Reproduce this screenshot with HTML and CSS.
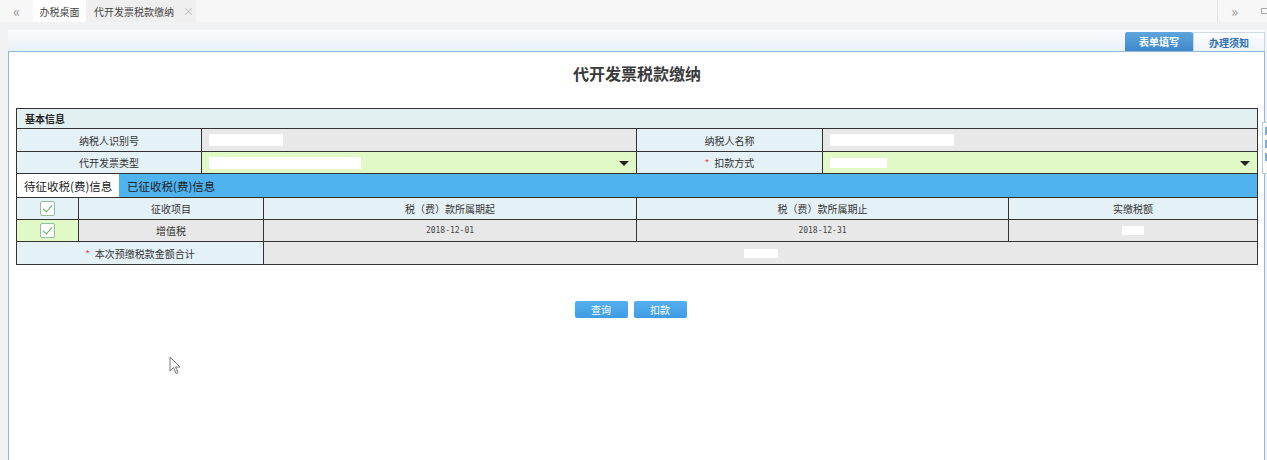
FILE: index.html
```html
<!DOCTYPE html>
<html lang="zh-CN">
<head>
<meta charset="utf-8">
<title>代开发票税款缴纳</title>
<link rel="stylesheet" href="styles.css">
</head>
<body>
<div class="topbar">
  <div class="nav-left">«</div>
  <div class="tab home">办税桌面</div>
  <div class="tab cur">代开发票税款缴纳<span class="close">×</span></div>
  <div class="fill"></div>
  <div class="nav-right">»</div>
  <div class="nav-max"><span class="max-box"></span></div>
</div>
<div class="main">
  <div class="phead">
    <div class="ptab on">表单填写</div>
    <div class="ptab off">办理须知</div>
  </div>
  <div class="panel">
    <h1 class="title">代开发票税款缴纳</h1>
    <div class="form">
      <div class="row sec"><div class="cell left">基本信息</div></div>
      <div class="row r1 cols4">
        <div class="cell lbl">纳税人识别号</div>
        <div class="cell val gray"><span class="mask" style="width:74px"></span></div>
        <div class="cell lbl">纳税人名称</div>
        <div class="cell val gray"><span class="mask" style="width:124px"></span></div>
      </div>
      <div class="row r2 cols4">
        <div class="cell lbl">代开发票类型</div>
        <div class="cell val green sel"><span class="mask" style="width:152px"></span><span class="caret"></span></div>
        <div class="cell lbl"><span class="req">*</span>扣款方式</div>
        <div class="cell val green sel"><span class="mask m2" style="width:57px"></span><span class="caret"></span></div>
      </div>
      <div class="tabs">
        <div class="itab on">待征收税(费)信息</div>
        <div class="itab">已征收税(费)信息</div>
      </div>
      <div class="row hdr cols5">
        <div class="cell lbl"><span class="chk"></span></div>
        <div class="cell lbl">征收项目</div>
        <div class="cell lbl">税（费）款所属期起</div>
        <div class="cell lbl">税（费）款所属期止</div>
        <div class="cell lbl">实缴税额</div>
      </div>
      <div class="row data cols5">
        <div class="cell green"><span class="chk"></span></div>
        <div class="cell gray">增值税</div>
        <div class="cell gray date">2018-12-01</div>
        <div class="cell gray date">2018-12-31</div>
        <div class="cell gray"><span class="mask m3" style="width:22px"></span></div>
      </div>
      <div class="row total cols2">
        <div class="cell lbl"><span class="req">*</span>本次预缴税款金额合计</div>
        <div class="cell gray"><span class="mask m3" style="width:34px"></span></div>
      </div>
    </div>
    <div class="btns">
      <button class="btn">查询</button>
      <button class="btn">扣款</button>
    </div>
  </div>
  <div class="peek"><span class="pk"></span><span class="pk"></span><span class="pk"></span></div>
  <svg class="cursor" width="12" height="19" viewBox="0 0 12 19"><path d="M1 1 L1 15 L4.5 11.5 L7 17.5 L9 16.6 L6.6 11 L11 11 Z" fill="#fff" stroke="#777" stroke-width="1"/></svg>
</div>
</body>
</html>
```

FILE: styles.css
```css
* { box-sizing: border-box; }
html, body { margin: 0; padding: 0; }
body {
  width: 1267px;
  height: 460px;
  overflow: hidden;
  background: #fff;
  font-family: "Noto Sans CJK SC", "Noto Sans", sans-serif;
  color: #333;
  position: relative;
}

/* top tab bar */
.topbar {
  height: 22px;
  display: flex;
  align-items: stretch;
  background: #f7f7f7;
}
.nav-left {
  width: 33px;
  display: flex;
  align-items: center;
  justify-content: center;
  color: #9a9a9a;
  font-size: 15px;
  padding-bottom: 2px;
}
.tab {
  display: flex;
  align-items: center;
  font-size: 10px;
  color: #444;
}
.tab.home {
  width: 53px;
  background: #fff;
  justify-content: center;
}
.tab.cur {
  width: 110px;
  background: #efefef;
  padding-left: 8px;
}
.close {
  margin-left: 9px;
  color: #bbb;
  font-size: 11px;
}
.fill { flex: 1; }
.nav-right {
  width: 34px;
  border-left: 1px solid #e2e2e2;
  display: flex;
  align-items: center;
  justify-content: center;
  color: #9a9a9a;
  font-size: 15px;
  padding-bottom: 2px;
}
.nav-max {
  width: 16px;
  display: flex;
  align-items: center;
  justify-content: flex-end;
}
.max-box {
  width: 6px;
  height: 6px;
  border: 1px solid #aaa;
  border-right: none;
}

/* main area */
.main {
  background: #f0f2f4;
  padding: 8px 2px 0 8px;
  height: 438px;
}
.phead {
  height: 21px;
  display: flex;
  justify-content: flex-end;
  align-items: flex-end;
  background: linear-gradient(#fbfcfd, #e9f1f7);
}
.ptab {
  height: 19px;
  display: flex;
  align-items: center;
  justify-content: center;
  font-size: 10px;
  font-weight: bold;
}
.ptab.on {
  width: 68px;
  background: linear-gradient(#5fa5de, #3e88cc);
  color: #fff;
  border-radius: 2px 2px 0 0;
}
.ptab.off {
  width: 72px;
  color: #2f6fb4;
  background: linear-gradient(#fdfeff, #edf3f8);
  border: 1px solid #c9dbe9;
  border-bottom: none;
}
.panel {
  background: #fff;
  border: 1px solid #8fb6dc;
  height: 417px;
  padding: 0 6px 0 7px;
}
.title {
  margin: 0;
  padding-top: 10px;
  height: 56px;
  line-height: 22px;
  text-align: center;
  font-size: 16px;
  font-weight: bold;
  color: #3a3a3a;
}

/* form grid */
.form {
  border: 1px solid #333;
  border-bottom: none;
  width: 1242px;
}
.row {
  display: grid;
  border-bottom: 1px solid #333;
}
.cols4 { grid-template-columns: 185px 435px 186px 434px; }
.cols5 { grid-template-columns: 62px 185px 373px 372px 248px; }
.cols2 { grid-template-columns: 247px 993px; }
.sec { height: 20px; background: #e2f0f2; }
.r1 { height: 23px; }
.r2 { height: 22px; }
.hdr { height: 23px; border-top: 1px solid #333; }
.data { height: 22px; }
.total { height: 23px; }
.cell {
  display: flex;
  align-items: center;
  justify-content: center;
  font-size: 10px;
  color: #333;
  border-right: 1px solid #333;
  position: relative;
}
.cell:last-child { border-right: none; }
.cell.left {
  justify-content: flex-start;
  padding-left: 8px;
  font-weight: bold;
  color: #222;
}
.lbl { background: #e4f1f6; }
.gray { background: #e8e8e8; }
.green { background: #e1f9c6; }
.val { justify-content: flex-start; padding-left: 7px; }
.mask {
  display: block;
  height: 12px;
  background: #fff;
}
.mask.m2 { height: 10px; }
.mask.m3 { height: 9px; }
.caret {
  position: absolute;
  right: 7px;
  top: 9px;
  width: 0;
  height: 0;
  border-left: 5px solid transparent;
  border-right: 5px solid transparent;
  border-top: 5px solid #222;
}
.req {
  color: #f04545;
  margin-right: 5px;
  font-size: 10px;
}
.date {
  font-family: "DejaVu Sans Mono", "Liberation Mono", monospace;
  font-size: 8px;
  color: #444;
}
.chk {
  width: 15px;
  height: 15px;
  border: 1px solid #8fbf9b;
  background: #fff;
  border-radius: 2px;
  position: relative;
}
.chk::after {
  content: "";
  position: absolute;
  left: 4px;
  top: 1px;
  width: 4px;
  height: 8px;
  border-right: 1.5px solid #5cb85c;
  border-bottom: 1.5px solid #5cb85c;
  transform: rotate(40deg);
}

/* inner tabs */
.tabs {
  height: 23px;
  display: flex;
  background: #4fb3f0;
}
.itab {
  display: flex;
  align-items: center;
  font-size: 11.5px;
  color: #222;
  padding: 0 0 0 8px;
}
.itab.on {
  width: 102px;
  background: #fff;
  padding-left: 7px;
}

/* buttons */
.btns {
  display: flex;
  justify-content: center;
  gap: 6px;
  margin-top: 36px;
  padding-right: 13px;
}
.btn {
  width: 53px;
  height: 17px;
  border: none;
  border-radius: 2px;
  background: linear-gradient(#55aef0, #3f9be2);
  color: #fff;
  font-family: "Noto Sans CJK SC", sans-serif;
  font-size: 10px;
  padding: 0;
}

/* overlays */
.peek {
  position: absolute;
  left: 1262px;
  top: 122px;
  width: 20px;
  height: 52px;
  background: #fff;
  border: 1px solid #b9cde0;
  display: flex;
  flex-direction: column;
  gap: 5px;
  padding: 4px 0 0 2px;
}
.pk {
  display: block;
  width: 4px;
  height: 8px;
  background: #5b86bf;
  opacity: 0.75;
}
.cursor {
  position: absolute;
  left: 169px;
  top: 356px;
}
```
